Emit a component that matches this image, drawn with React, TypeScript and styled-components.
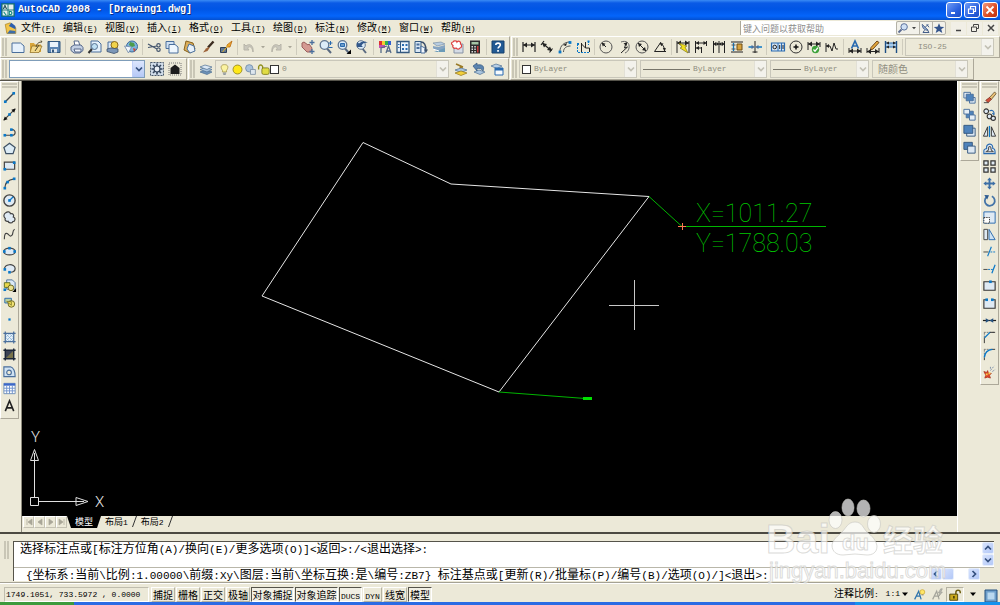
import React from "react";
import styled, { createGlobalStyle, css } from "styled-components";

const c = {
  face: "#ece9d8",
  shade: "#aca899",
  dark: "#716f64",
  light: "#ffffff",
  blue: "#2a6bb0",
  node: "#0a78c8",
  ink: "#222222",
  steel: "#4a6f9c",
  pale: "#cfe0f2",
  gold: "#e8b93c",
  disabled: "#a9a698",
};

const mono = `"Liberation Mono", "Noto Sans CJK SC", monospace`;
const cjk = `"Noto Sans CJK SC", "Liberation Sans", sans-serif`;

const GlobalStyle = createGlobalStyle`
  * { box-sizing: border-box; }
  body { margin: 0; background: ${c.face}; font-family: ${cjk}; font-size: 10px; line-height: 12px; color: #000; }
  button, input, select { font: inherit; color: inherit; margin: 0; }
`;

/* ---------- icon drawings, all on a 16 x 16 grid ---------- */

const Dot = ({ x, y, f = c.node, r = 1.4 }: { x: number; y: number; f?: string; r?: number }) => (
  <rect x={x - r} y={y - r} width={r * 2} height={r * 2} fill={f} />
);
const Arrows = ({ y = 8, a = 2, b = 14 }: { y?: number; a?: number; b?: number }) => (
  <g>
    <path d={`M${a} ${y}H${b}`} stroke={c.ink} />
    <path d={`M${a} ${y}l4-2.4v4.8zM${b} ${y}l-4-2.4v4.8z`} fill={c.ink} />
  </g>
);
const page = <path d="M2 4h8.500l3.500 3v6.500h-12z" fill="#e6f1fb" stroke={c.steel} />;
const lens = (
  <g>
    <path d="M9 9.500l4 4.500" stroke="#5a6a80" strokeWidth="2" />
    <circle cx="6.500" cy="6" r="4.300" fill="#dcecf8" stroke="#60758f" strokeWidth="1.300" />
  </g>
);

const art: Record<string, React.ReactNode> = {
  new: page,
  open: (
    <g>
      <path d="M2 4h4l1 1.500h6V13H2z" fill="#d9a63a" />
      <path d="M4 7h10l-3 6.500H2z" fill="#f3d98a" stroke="#8c6a1c" strokeWidth=".7" />
      <path d="M8 8c1-4 3-5 6-5l-1-1.500M11 6l-4 6" stroke="#51492d" fill="none" />
    </g>
  ),
  save: (
    <g>
      <path d="M2 2.500h12v11H2z" fill="#5c86b4" stroke="#33587f" />
      <path d="M4 3h8v5H4z" fill="#eaf3fb" />
      <path d="M5 10h6v3.500H5z" fill="#dde6ee" />
      <path d="M6 10.500h2v3H6z" fill="#33587f" />
    </g>
  ),
  print: (
    <g stroke="#56688a">
      <path d="M5 2h4.500L11 7H6z" fill="#fff" />
      <path d="M2 8l3-2h7l2 2.500v3L11 14H5l-3-2.500z" fill="#c3d0e4" />
      <path d="M5 10h7v3H6z" fill="#f0f4fa" />
    </g>
  ),
  preview: (
    <g>
      <path d="M4 2h7l3 3v8H4z" fill="#e6f1fb" stroke={c.steel} />
      <path d="M5 10l-3.500 4" stroke="#333" strokeWidth="2" />
      <circle cx="7.500" cy="7.500" r="3" fill="#bfe0f4" stroke="#55708f" />
    </g>
  ),
  publish: (
    <g>
      <path d="M3 3h7l2 2v6H3z" fill="#dbe9f6" stroke={c.steel} />
      <circle cx="9.500" cy="6" r="3.500" fill="#f0d34c" stroke="#8c6a1c" />
      <path d="M2 10l4-1 7 1v3l-4 1.500-7-2z" fill="#7c97b8" stroke="#3c506c" strokeWidth=".8" />
    </g>
  ),
  web: (
    <g>
      <circle cx="9" cy="7.500" r="5.500" fill="#7fb3dd" stroke="#3d6c9c" />
      <path d="M7 3l4 1 1 3-3 1-3-2z" fill="#4e9c4a" />
      <path d="M1.500 7l7 1-3 6z" fill="#f3f7fb" stroke="#6e88a8" strokeWidth=".8" />
      <path d="M10 9l3 1-2 3z" fill="#cc4a38" />
    </g>
  ),
  cut: (
    <g stroke="#46576e" fill="none" strokeWidth="1.200">
      <path d="M2 5l9 5M2 8.500L11 7" />
      <circle cx="12.500" cy="6.300" r="1.700" />
      <circle cx="12.500" cy="10.700" r="1.700" />
    </g>
  ),
  copy: (
    <g stroke={c.steel}>
      <path d="M2 2.500h8v7H2z" fill="#cfe0f2" />
      <path d="M5 5.500h6l3 2.500v6H5z" fill="#eef6fd" />
    </g>
  ),
  paste: (
    <g>
      <path d="M4 2l7 2 2 6-5 4-6-3z" fill="#dcae5a" stroke="#87611c" />
      <path d="M7 5l5 2 1 5-5 2-3-4z" fill="#e7f1fb" stroke={c.steel} />
    </g>
  ),
  brush: (
    <g>
      <path d="M13.500 2.500L8 8.500" stroke="#3b2c20" strokeWidth="2.400" />
      <path d="M8.500 8L6 9.500 3 13.500l4.500-1.500L9.500 9z" fill="#9c6238" />
    </g>
  ),
  block: (
    <g>
      <path d="M9 6l5-4-2 6h-3z" fill="#f3a42c" stroke="#b86a10" strokeWidth=".8" />
      <path d="M2.500 8.500h6v5h-6z" fill="#5f7896" stroke="#2e3f56" />
      <path d="M4.500 13l7-8" stroke="#e6b020" />
    </g>
  ),
  undo: <path d="M12 13C13 6 8 4 5 7L3 5v6h5L6.500 9C8 7 11 7 12 13z" fill="#c9c7bd" stroke="#b7b4a8" />,
  redo: <path d="M4 13C3 6 8 4 11 7l2-2v6H8L9.500 9C8 7 5 7 4 13z" fill="#c9c7bd" stroke="#b7b4a8" />,
  pan: (
    <g>
      <path d="M2 4l2-1 4 3 1-1 3 4-1 4H7L2 8z" fill="#d49a92" stroke="#9b5f5c" />
      <path d="M12 1v5M9.500 3.500h5M12 10v5M9.500 12.500h5" stroke={c.steel} strokeWidth="1.300" />
    </g>
  ),
  zoom: (
    <g>
      {lens}
      <path d="M10.500 4h4M12.500 2v4M10.500 8.500h4" stroke={c.blue} />
    </g>
  ),
  zoomWindow: (
    <g>
      {lens}
      <path d="M4.500 4.500h4v3h-4z" fill="#6b9ac6" stroke={c.blue} />
      <path d="M15 10.500V15h-4.500z" fill="#000" />
    </g>
  ),
  zoomPrev: (
    <g>
      <path d="M8 9l4 5" stroke="#5a6a80" strokeWidth="2" />
      <circle cx="7" cy="6" r="4.300" fill="#dcecf8" stroke="#60758f" />
      <path d="M3 8V3l2 1.500C8 1.500 12 2 14 4c-3-.5-5 0-6.500 2.500L9 8z" fill="#32588a" />
    </g>
  ),
  properties: (
    <g>
      <path d="M2 2h3v4H2z" fill="#e03030" />
      <path d="M5 2h3v4H5z" fill="#f4d030" />
      <path d="M8 2h3v4H8z" fill="#30b050" />
      <path d="M11 2h3v4h-3z" fill="#3060d0" />
      <path d="M2 6h6v3H2z" fill="#c050b0" />
      <path d="M4 14V9l6-2M9 14l2.500-7 2.500 7M10 12h3" stroke="#566b88" fill="none" strokeWidth="1.300" />
    </g>
  ),
  center: (
    <g>
      <path d="M2 2.500h12v11H2z" fill="#e9f2fa" stroke="#33587f" strokeWidth="1.300" />
      <path d="M5.500 3v10" stroke="#33587f" />
      <path d="M7 5h2v2H7zM10.500 5h2v2h-2zM7 9h2v2H7zM10.500 9h2v2h-2zM3 5h1.500v1H3zM3 8h1.500v1H3z" fill={c.blue} />
    </g>
  ),
  palettes: (
    <g>
      <path d="M2 2.500h6v11H2z" fill="#d9e7f4" stroke="#33587f" />
      <path d="M3.500 4.500h3v2h-3zM3.500 8h3v2h-3z" fill={c.steel} />
      <path d="M8 7l4 2v5H8z" fill="#f4f8fc" stroke={c.steel} />
      <path d="M8 3c4 0 5 3 5 9" fill="none" stroke="#3c506c" strokeWidth="1.500" />
      <path d="M11 10.500h4L13 14z" fill="#3c506c" />
    </g>
  ),
  sheetSet: (
    <g>
      <path d="M2 4l8-1 4 2-8 2z" fill="#b8cde2" stroke="#6d859f" strokeWidth=".6" />
      <path d="M2 7l5 1 7-2v4l-6 3-6-3z" fill="#86a4c2" />
      <path d="M3 13h11V9z" fill="#6b9bb8" />
      <path d="M2 10l6 2" stroke="#fff" />
    </g>
  ),
  markup: (
    <g>
      <path d="M5 5h9v9H5z" fill="#d5dce6" stroke="#8793a5" />
      <path d="M4 3c1-2 4-1 4 0 2-2 4 0 3.500 2 2 1 1 4-.5 4-1 2-3 1-4 0-2 1-4-1-3-2.500C1.500 5 2.500 3 4 3z" fill="#fff" stroke="#dd4040" strokeWidth="1.200" />
    </g>
  ),
  calc: (
    <g>
      <path d="M3 1.500h10v13H3z" fill="#2c2c2c" />
      <path d="M4.500 3h7v2.500h-7z" fill="#a4c4a4" />
      <path d="M4.500 7h1.500v1.500H4.500zM7.300 7h1.500v1.500H7.300zM4.500 9.500h1.500V11H4.500zM7.300 9.500h1.500V11H7.300zM4.500 12h1.500v1.500H4.500zM7.300 12h1.500v1.500H7.300z" fill="#ddd" />
      <path d="M10 7h1.500v6.500H10z" fill="#c83838" />
    </g>
  ),
  help: (
    <g>
      <path d="M2 2h12v12H2z" fill="#225a94" stroke="#17406c" />
      <path d="M5.800 6C5.800 3.500 10.300 3.500 10.300 6c0 1.500-2.200 1.700-2.200 3.600" stroke="#fff" strokeWidth="1.600" fill="none" />
      <path d="M7.200 11h1.700v1.700H7.200z" fill="#fff" />
    </g>
  ),
  dimLinear: (
    <g>
      <path d="M2 3v10M14 3v10" stroke={c.ink} strokeWidth="1.200" />
      <Arrows y={6} />
    </g>
  ),
  dimAligned: (
    <g stroke={c.ink}>
      <path d="M2 6l3-4M10.500 13.500l3-4M4 4.500l8 7" strokeWidth="1.200" />
      <path d="M3 4l5 1-3 3.500zM13 12l-5-1 3-3.500z" fill={c.ink} stroke="none" />
    </g>
  ),
  dimArc: (
    <g>
      <path d="M3 12C3 7 7 3 13 3M6.500 13c0-4 3-6 7-6" fill="none" stroke="#555" />
      <path d="M6 6l4-2-1 3z" fill={c.ink} />
      <Dot x={3} y={13} />
      <Dot x={13} y={3.500} />
    </g>
  ),
  dimOrdinate: (
    <g>
      <path d="M6.500 4v9M6.500 5l4 4h4v4M10.500 9V3" stroke={c.ink} fill="none" />
      <path d="M2.500 5v8.500h12M13.500 2v4" stroke={c.node} strokeDasharray="2 1" />
      <Dot x={3} y={5} r={1} />
      <Dot x={13.500} y={2.500} r={1} />
    </g>
  ),
  dimRadius: (
    <g>
      <circle cx="8" cy="8" r="6" fill="none" stroke="#555" />
      <path d="M8 8L4 4" stroke={c.ink} />
      <path d="M3.500 3.500l4 1.200-2.700 2.800z" fill={c.ink} />
    </g>
  ),
  dimJogged: (
    <g>
      <path d="M5 3c5-2 9 1 8 6-.5 3-2 4-4 5" fill="none" stroke="#666" />
      <path d="M10 4L8.500 9l3-1L5 14" stroke={c.ink} fill="none" />
      <path d="M11.500 3l-4 1.500 3 2.500z" fill={c.ink} />
    </g>
  ),
  dimDiameter: (
    <g>
      <circle cx="8" cy="8" r="6" fill="none" stroke="#555" />
      <path d="M4 4l8 8" stroke={c.ink} />
      <path d="M4 4l4 1-3 3zM12 12l-4-1 3-3z" fill={c.ink} />
    </g>
  ),
  dimAngular: (
    <g>
      <path d="M9 3L2.500 12.500H14M8 4c3 1.500 4.500 4 4.500 8" fill="none" stroke={c.ink} />
      <path d="M7.500 4l4 .5-2 2.800zM12.800 12.500l-2-3.500h3z" fill={c.ink} />
    </g>
  ),
  dimQuick: (
    <g>
      <path d="M2 2v12M14 2v12" stroke={c.ink} />
      <Arrows y={4} />
      <path d="M4 4l8 3-2 1 3 6-8-5 2-1z" fill="#f3e11c" stroke="#6f6510" strokeWidth=".6" />
    </g>
  ),
  dimBaseline: (
    <g>
      <path d="M2.500 2v12M8.500 8v6M13.500 2v5" stroke={c.ink} />
      <path d="M3 4h10M3 9h6" stroke={c.ink} />
      <path d="M3 4l3-2v4zM13.500 4l-3-2v4zM3 9l3-2v4z" fill={c.ink} />
    </g>
  ),
  dimContinue: (
    <g>
      <path d="M2.500 2v12M8 2v12M13.500 2v12M3 5h10" stroke={c.ink} />
      <path d="M2.500 5l2.500-2v4zM8 5L5.500 3v4zM8 5l2.500-2v4zM13.500 5L11 3v4z" fill={c.ink} />
    </g>
  ),
  dimSpace: (
    <g>
      <path d="M2 3h12M2 13h12" stroke={c.ink} strokeWidth="1.200" />
      <path d="M8 5h5v6H8z" fill="#d8a23c" stroke="#6e4e14" />
      <path d="M4.500 4v8" stroke={c.node} strokeWidth="1.300" />
      <path d="M2.500 6h4M2.500 10h4" stroke="#555" />
    </g>
  ),
  dimBreak: (
    <g>
      <path d="M8 2v12" stroke={c.ink} />
      <path d="M1.500 8h4M11 8h4" stroke={c.node} strokeWidth="1.600" />
      <path d="M8 8L4.500 6v4zM8 8l3.500-2v4z" fill={c.steel} />
      <path d="M5.500 13h5" stroke={c.ink} />
    </g>
  ),
  tolerance: (
    <g>
      <path d="M1.500 4h13v8h-13z" fill="#d6e6f5" stroke={c.blue} strokeWidth="1.200" />
      <path d="M8 4v8M11.500 4v8" stroke={c.blue} />
      <circle cx="4.700" cy="8" r="1.800" fill="none" stroke="#222" />
      <path d="M9.700 6v4M13 6v4" stroke="#222" />
    </g>
  ),
  centerMark: (
    <g>
      <circle cx="8" cy="8" r="6" fill="none" stroke="#333" />
      <path d="M5.500 8h5M8 5.500v5" stroke="#111" strokeWidth="1.500" />
    </g>
  ),
  inspection: (
    <g>
      <path d="M2 3v8M14 3v5" stroke={c.ink} />
      <Arrows y={5} />
      <circle cx="9.500" cy="10.500" r="3.700" fill="#3da23a" />
      <path d="M7.500 10.500l1.500 1.700 3-3.500" stroke="#fff" strokeWidth="1.300" fill="none" />
    </g>
  ),
  dimJogLine: (
    <g>
      <path d="M2 4v9M2 7h4l2 5 2-8 2 6h2" fill="none" stroke={c.ink} />
      <path d="M2 7l3-2v4z" fill={c.ink} />
    </g>
  ),
  dimEdit: (
    <g>
      <path d="M4.500 9.500L8 2l3.500 7.500M5.800 7h4.400" fill="none" stroke={c.blue} strokeWidth="1.700" />
      <path d="M2 9v5M14 9v5" stroke={c.ink} />
      <Arrows y={12} />
    </g>
  ),
  dimTextEdit: (
    <g>
      <path d="M12 2l2 1.500L8 10l-2.500 1 .5-2.500z" fill="#e6a93c" stroke="#70481a" />
      <path d="M2 9v5M14 9v5" stroke={c.ink} />
      <Arrows y={12.500} />
    </g>
  ),
  dimUpdate: (
    <g>
      <path d="M2.500 2v12M13.500 2v12" stroke="#1d4f86" strokeWidth="1.400" />
      <path d="M3 4h10v4H3z" fill="#a8cbe9" />
      <path d="M3 4h10M3 8h10" stroke={c.blue} />
      <path d="M3 4l3-1.500v3zM13 4l-3-1.500v3zM3 8l3-1.500v3zM13 8l-3-1.500v3z" fill={c.ink} />
    </g>
  ),
  gear: (
    <g>
      <path d="M1.500 1.500h13v13h-13z" fill="#cfdbe8" stroke="#4a5a6c" strokeDasharray="2 1" />
      <path d="M8 2.500v11M2.500 8h11M4 4l8 8M12 4l-8 8" stroke="#33445a" strokeWidth="1.600" />
      <circle cx="8" cy="8" r="3" fill="#e8eef5" stroke="#33445a" strokeWidth="1.200" />
    </g>
  ),
  myWorkspace: (
    <g>
      <path d="M2 2h12v12H2z" fill="none" stroke="#777" strokeDasharray="1 1" />
      <path d="M3.500 13V7L8 3.500 12.500 7v6z" fill="#1c1c1c" />
    </g>
  ),
  layers: (
    <g stroke="#4c6f92" strokeWidth=".7">
      <path d="M2 11l5-2 7 2-5 2.500z" fill="#6d92b8" />
      <path d="M2 8.500l5-2 7 2-5 2.500z" fill="#a9c4de" />
      <path d="M2 6l5-2 7 2-5 2.500z" fill="#dbe8f4" />
    </g>
  ),
  bulb: (
    <g>
      <path d="M8 2c5 0 5 4 2.500 7v2h-5V9C3 6 3 2 8 2z" fill="#fbf3a0" stroke="#a5964a" />
      <path d="M6 12.500h4M6.500 14h3" stroke="#6e7a88" />
    </g>
  ),
  sun: <circle cx="8" cy="8" r="5.500" fill="#ffe818" stroke="#9b8f28" strokeWidth="1.200" />,
  viewport: (
    <g>
      <circle cx="6.500" cy="6.500" r="4.500" fill="#a9c2dc" stroke="#6b88a8" />
      <path d="M8 8h6v6H8z" fill="#dde6ee" stroke="#7d8fa3" />
    </g>
  ),
  lockOpen: (
    <g>
      <path d="M2 8V5a2.500 2.500 0 0 1 5 0v3" fill="none" stroke="#8f8f1c" strokeWidth="1.700" />
      <rect x="6" y="6" width="9" height="8" rx="2" fill="#e0dc44" stroke="#77751a" />
    </g>
  ),
  makeCurrent: (
    <g>
      <path d="M2 9l6-2 6 2-6 2.500z" fill="#a9c4de" stroke="#4c6f92" strokeWidth=".7" />
      <path d="M2 12l6-2 6 2-6 2.500z" fill="#f2cf3a" stroke="#90741a" strokeWidth=".7" />
      <path d="M3 3l7 3M10 6L6.500 6.500" stroke="#9a7a26" strokeWidth="1.600" />
    </g>
  ),
  layerPrev: (
    <g>
      <path d="M3 11l5-2 6 2-5 2.500z" fill="#a9c4de" stroke="#4c6f92" strokeWidth=".7" />
      <path d="M2 5l4-3v2c5-1 8 1 6 6-1-2-3-3-6-2.500V10z" fill="#5b84b0" stroke="#33587f" strokeWidth=".7" />
    </g>
  ),
  layerState: (
    <g>
      <path d="M2 5l5-2 6 2-5 2.500z" fill="#b9d0e6" stroke="#4c6f92" strokeWidth=".7" />
      <path d="M6 7h8v7H6z" fill="#f6fafd" stroke={c.blue} />
      <path d="M6 7h8v2.500H6z" fill={c.blue} />
    </g>
  ),
  line: (
    <g>
      <path d="M3 13L13 3" stroke="#444" strokeWidth="1.400" />
      <Dot x={3.500} y={12.500} />
      <Dot x={12.500} y={3.500} />
    </g>
  ),
  xline: (
    <g>
      <path d="M2 14L14 2" stroke="#444" strokeWidth="1.300" />
      <path d="M1.500 14.500l4.500-1.500L3 10zM14.500 1.500L10 3l3 3z" fill="#111" />
      <Dot x={8} y={8} />
    </g>
  ),
  pline: (
    <g>
      <path d="M3 12h8c4 0 4-6 0-6H9" fill="none" stroke="#444" strokeWidth="1.200" />
      <Dot x={3} y={12} />
      <Dot x={10} y={12} />
      <Dot x={10} y={6} />
    </g>
  ),
  polygon: <path d="M8 2.500l6 4.500-2.200 6.500H4.200L2 7z" fill="#dcebf5" stroke="#3d5064" strokeWidth="1.300" />,
  rectangle: (
    <g>
      <path d="M2.500 4.500h11v7.500h-11z" fill="#dfeaf4" stroke="#444" strokeWidth="1.300" />
      <Dot x={13} y={5} />
      <Dot x={3} y={12} />
    </g>
  ),
  arc: (
    <g>
      <path d="M3 13C3 7 7 4 13 3" fill="none" stroke="#444" strokeWidth="1.300" />
      <Dot x={3} y={13} />
      <Dot x={6} y={6.500} />
      <Dot x={13} y={3} />
    </g>
  ),
  circle: (
    <g>
      <circle cx="8" cy="8" r="6" fill="#dfeaf4" stroke="#444" strokeWidth="1.500" />
      <path d="M8 8l4-4" stroke={c.node} strokeWidth="1.300" />
      <Dot x={8} y={8} />
    </g>
  ),
  cloud: (
    <path d="M4 3c2-2 5-1 5 1 3-1 4 2 3 3.500 3 1 2 5-.500 5-1 2-4.500 1.500-5-.500-2 .500-4-1-3-3C1 7 2 4 4 3z" fill="#dfeaf4" stroke="#444" strokeWidth="1.300" />
  ),
  spline: <path d="M2.500 13c0-5 1-7 3-6s3 4 5 2 0-5 3-6.500" fill="none" stroke="#444" strokeWidth="1.200" />,
  ellipse: (
    <g>
      <ellipse cx="8" cy="8" rx="6" ry="3.700" fill="#dfeaf4" stroke="#444" strokeWidth="1.300" />
      <Dot x={8} y={4.500} />
      <Dot x={2.500} y={8} />
      <Dot x={13.500} y={8} />
    </g>
  ),
  ellipseArc: (
    <g>
      <path d="M3 9C1 3 14 2 14 8c0 3-3 4-5 4" fill="#dfeaf4" stroke="#444" strokeWidth="1.300" />
      <Dot x={3} y={9} />
      <Dot x={8} y={12} />
    </g>
  ),
  insertBlock: (
    <g>
      <path d="M5 2h6l3 3v7H5z" fill="#dbe9f6" stroke={c.steel} />
      <path d="M2.500 5h6v5h-6z" fill="#e9d84c" stroke="#5d6f2a" />
      <circle cx="9.500" cy="10.500" r="3" fill="#e9e08c" stroke="#6a6420" />
      <path d="M15 11v4h-4z" fill="#000" />
      <Dot x={3} y={12.500} />
    </g>
  ),
  makeBlock: (
    <g>
      <path d="M3 3.500h7v5H3z" fill="#b9d0a0" stroke={c.blue} />
      <circle cx="10" cy="9.500" r="3.500" fill="#f1e274" stroke="#6a6420" />
      <path d="M5 7h5v4z" fill="#e9d84c" stroke="#6a6420" strokeWidth=".7" />
    </g>
  ),
  point: <Dot x={8} y={8} r={1.200} />,
  hatch: (
    <g>
      <path d="M3.500 3.500h9v9h-9z" fill="#eaf3fa" />
      <path d="M4 8l4-4M4 12l8-8M8 12l4-4M4 4l8 8M4 8l4 4M8 4l4 4" stroke="#7fa9cf" strokeWidth=".7" />
      <path d="M3.500 1.500v13M12.500 1.500v13M1.500 3.500h13M1.500 12.500h13" stroke={c.steel} strokeWidth="1.300" />
    </g>
  ),
  gradient: (
    <g>
      <path d="M3.500 3.500h9v9h-9z" fill="#3b4254" />
      <path d="M12.500 3.500v9h-9z" fill="#77724a" />
      <path d="M3.500 1.500v13M12.500 1.500v13M1.500 3.500h13M1.500 12.500h13" stroke="#1b2638" strokeWidth="1.500" />
    </g>
  ),
  region: (
    <g>
      <path d="M2 13.500V3h7c3 1 5 4 5 10.500z" fill="#cfe2f3" stroke={c.steel} strokeWidth="1.200" />
      <circle cx="7.500" cy="9" r="2.500" fill="#ece9d8" stroke={c.steel} strokeWidth="1.200" />
    </g>
  ),
  table: (
    <g>
      <path d="M2 2.500h12v11H2z" fill="#fff" stroke="#7090b8" />
      <path d="M2 2.500h12V5H2z" fill="#3c68c8" />
      <path d="M2 7.700h12M2 10.500h12M5 5v8.500M8 5v8.500M11 5v8.500" stroke="#6f92cc" />
    </g>
  ),
  mtext: <path d="M3.500 14L8 3l4.500 11M5 10.500h6" fill="none" stroke="#222" strokeWidth="1.700" />,
  orderFront: (
    <g stroke={c.steel}>
      <path d="M2 2.500h7v6H2zM8 8h6v6H8z" fill="#e6eef6" />
      <path d="M4.500 4.500h7.500v7H4.500z" fill="#4f83bb" />
    </g>
  ),
  orderBack: (
    <g stroke={c.steel}>
      <path d="M4.500 4.500h7.500v7H4.500z" fill="#4f83bb" />
      <path d="M2 2.500h6v5H2zM8 8.500h6V14H8z" fill="#e6eef6" />
    </g>
  ),
  orderAbove: (
    <g stroke="#33587f">
      <path d="M5 5.500h9V14H5z" fill="#dce8f3" />
      <path d="M2 2.500h9.500V11H2z" fill="#4f83bb" />
    </g>
  ),
  orderUnder: (
    <g stroke="#33587f">
      <path d="M2 2.500h9V10H2z" fill="#4f83bb" />
      <path d="M6 6.500h8V14H6z" fill="#dce8f3" />
    </g>
  ),
  erase: (
    <g>
      <path d="M13.500 2L8 8l2 2 5-6z" fill="#e8c078" stroke="#5e4620" strokeWidth=".8" />
      <path d="M8 8l-4 3 2.500 2.500L10 10z" fill="#d0503c" stroke="#7b2a1c" strokeWidth=".8" />
      <path d="M2 13.500h5" stroke="#444" />
    </g>
  ),
  copyObj: (
    <g fill="#dfeaf4" stroke="#333" strokeWidth="1.200">
      <circle cx="4.500" cy="4.500" r="2.500" />
      <circle cx="8" cy="10" r="2.500" />
      <circle cx="12" cy="12" r="2.300" />
      <path d="M8 4c3-1 5 0 5 4M13 8.500l-2-2" fill="none" stroke={c.blue} />
    </g>
  ),
  mirror: (
    <g>
      <path d="M6 3v10H1.500zM10 3v10h4.500z" fill="#dfeaf4" stroke="#333" />
      <path d="M8 2v12" stroke={c.node} strokeWidth="1.300" />
    </g>
  ),
  offset: (
    <g fill="none" strokeWidth="1.200">
      <path d="M2 13.500V10c0-1 2-1.500 3-2-1-5 6-7 6.500-1v1c2 .500 2.500 1 2.500 5.500z" stroke={c.blue} fill="#dfeaf4" />
      <path d="M4.500 11.500c1-1 3-1 2.500-3-.500-3 2.500-3.500 2.500-1 0 3 1 2.500 2.500 4z" stroke="#555" />
    </g>
  ),
  array: (
    <g fill="#dfeaf4" stroke="#333" strokeWidth="1.300">
      <path d="M2 2h4.500v4.500H2zM9.500 2H14v4.500H9.500zM2 9.500h4.500V14H2zM9.500 9.500H14V14H9.500z" />
    </g>
  ),
  move: (
    <path d="M8 1.500l2.500 3H9V7h2.500V5.500l3 2.500-3 2.500V9H9v2.500h1.500L8 14.500l-2.500-3H7V9H4.500v1.500L1.500 8l3-2.500V7H7V4.500H5.500z" fill="#3c6ea6" />
  ),
  rotate: (
    <g>
      <path d="M5 4.200A5.300 5.300 0 1 0 10.500 3.500" fill="none" stroke="#4474a8" strokeWidth="1.900" />
      <path d="M2.500 2l5 .500L5.500 7z" fill="#2c5a90" />
    </g>
  ),
  scale: (
    <g>
      <path d="M2 2h12v12H2z" fill="#dfeaf4" stroke={c.blue} />
      <path d="M2 8h6v6H2z" fill="#fff" stroke="#333" strokeDasharray="1.500 1" />
    </g>
  ),
  stretch: (
    <g>
      <path d="M2 2.500h4v11H2z" fill="#dfeaf4" stroke="#444" />
      <path d="M7.500 2.500l6.500 11H7.500z" fill="#cfe2f3" stroke={c.blue} />
    </g>
  ),
  trim: (
    <g>
      <path d="M1.500 8.500H7" stroke="#444" />
      <path d="M9 8.500h6" stroke={c.node} strokeDasharray="2 1" />
      <path d="M6 13l4-10" stroke={c.node} strokeWidth="1.200" />
    </g>
  ),
  extend: (
    <g>
      <path d="M1.500 9H6" stroke="#444" />
      <path d="M6.500 9H12" stroke={c.node} strokeDasharray="2 1" />
      <path d="M10.500 13l3.500-9" stroke={c.node} strokeWidth="1.300" />
    </g>
  ),
  breakPoint: (
    <g>
      <path d="M2 4h12v9H2z" fill="#dfeaf4" stroke="#333" strokeWidth="1.200" />
      <Dot x={9} y={4} />
    </g>
  ),
  breakTwo: (
    <g>
      <path d="M5 4H2v9h12V4h-3" fill="#dfeaf4" stroke="#333" strokeWidth="1.200" />
      <Dot x={5} y={4} />
      <Dot x={11} y={4} />
    </g>
  ),
  join: (
    <g>
      <path d="M1 8h14" stroke="#222" strokeWidth="1.300" />
      <path d="M8 8L4 5.500v5zM8 8l4-2.500v5z" fill="#25527f" />
    </g>
  ),
  chamfer: (
    <g fill="none">
      <path d="M2 2.500h12" stroke="#777" strokeDasharray="2 1" />
      <path d="M2.500 14V8M8 2.500h6" stroke="#333" />
      <path d="M2.500 8.500L8.500 2.500" stroke={c.node} strokeWidth="1.300" />
      <path d="M2.500 3v5" stroke="#777" strokeDasharray="2 1" />
    </g>
  ),
  fillet: (
    <g fill="none">
      <path d="M2 2.500h8M2.500 3v7" stroke="#777" strokeDasharray="2 1" />
      <path d="M2.500 14v-3M10 2.500h4" stroke="#333" />
      <path d="M2.500 11C3 6 6 3 11 2.500" stroke={c.node} strokeWidth="1.500" />
    </g>
  ),
  explode: (
    <g>
      <path d="M2 8l3 1 1-2 1 3 3 0-2 2 1 3-3-1-3 1 1-3z" fill="#e0452c" stroke="#a02814" strokeWidth=".7" />
      <path d="M4 10h2v2H4zM7 9h2v2H7z" fill="#f7cf4a" />
      <path d="M9 7l4-5M11 8l3-2M9 5V2" stroke="#7d8fa8" strokeDasharray="2 1" />
    </g>
  ),
  appLogo: (
    <g>
      <path d="M1 1h14v14H1z" fill="#e3efed" stroke="#0e6a6e" strokeWidth="1.500" />
      <path d="M8 1v14M1 8h14" stroke="#0e6a6e" />
      <path d="M2.500 7L4.500 2.500 6.500 7M3.500 5.500h2" stroke="#0b3c48" fill="none" />
      <path d="M9.500 13.500V9.500c4 0 4 4 0 4zM3 10l3 4" stroke="#0e8a80" fill="none" strokeWidth="1.200" />
    </g>
  ),
  docLogo: (
    <g>
      <path d="M1.500 3l6-2 7 6v7h-11z" fill="#f2c448" stroke="#a37a1a" strokeWidth=".8" />
      <path d="M6 5l3-4 5 4v4z" fill="#2c5fae" />
      <path d="M4 14l3-4 7 1v3z" fill="#3f6ea8" />
    </g>
  ),
  search: (
    <g>
      <path d="M6 10l-4 4" stroke="#5a6a90" strokeWidth="2.400" />
      <circle cx="9.500" cy="6.500" r="4.300" fill="#cfe0f5" stroke="#566c98" strokeWidth="1.300" />
    </g>
  ),
  satellite: (
    <g>
      <path d="M3 3c0 6 3 8 8 8z" fill="#8fa6c8" stroke="#3e5886" />
      <path d="M7 7l4-4M9 3l3 4M6 11l-2 3h8l-2-3" stroke="#3e5886" fill="none" strokeWidth="1.300" />
    </g>
  ),
  star: <path d="M8 1.500l2 4.700 5 .3-4 3.200 1.400 5L8 12l-4.400 2.700L5 9.700 1 6.500l5-.3z" fill="#33548c" />,
  annoBulb: (
    <g>
      <path d="M2 14L7 4l3 10M4 10h5" fill="none" stroke="#2e74ae" strokeWidth="1.500" />
      <circle cx="11.500" cy="5" r="3" fill="#ffe668" stroke="#c8a022" strokeWidth=".8" />
      <path d="M10.500 8.500h2.500" stroke="#777" />
    </g>
  ),
  annoBolt: (
    <g>
      <path d="M2 14L7 4l3 10M4 10h5" fill="none" stroke="#a5a59c" strokeWidth="1.500" />
      <path d="M12 1l-3 5h2l-2 5 5-6h-2l2-4z" fill="#b9b9b0" stroke="#8e8e84" strokeWidth=".6" />
    </g>
  ),
  statusLock: (
    <g>
      <path d="M9 8V5a2.500 2.500 0 0 1 5 0v1" fill="none" stroke="#6e5f10" strokeWidth="1.700" />
      <path d="M2 7h9v7H2z" fill="#c8a81c" stroke="#4c4008" />
      <path d="M6 9h1.500v3H6z" fill="#2a2404" />
    </g>
  ),
  cleanScreen: (
    <g>
      <path d="M2 2h12v12H2z" fill="#6f9fcb" stroke="#24507f" />
      <path d="M4.500 4.500h7v7h-7z" fill="#b9d8f0" />
    </g>
  ),
};

const Glyph = styled.svg<{ $size?: number }>`
  display: block;
  flex: none;
  width: ${(p) => p.$size ?? 16}px;
  height: ${(p) => p.$size ?? 16}px;
`;
const Icon = ({ name, size }: { name: string; size?: number }) => (
  <Glyph $size={size} viewBox="0 0 16 16" fill="none" aria-hidden="true">
    {art[name]}
  </Glyph>
);

/* ---------- mixed Chinese and Latin text ---------- */

const Latin = styled.span<{ $size: number }>`
  font-family: ${mono};
  font-size: ${(p) => p.$size}px;
`;
const Mixed = ({ text, latin = 8 }: { text: string; latin?: number }) => (
  <>
    {text.split(/([\x20-\x7e]+)/).map((part, i) =>
      i % 2 ? (
        <Latin key={i} $size={latin}>
          {part}
        </Latin>
      ) : (
        part
      )
    )}
  </>
);

/* ---------- window frame ---------- */

const Window = styled.div`
  display: flex;
  flex-direction: column;
  min-height: 100vh;
  position: relative;
  overflow: hidden;
`;

const TitleBar = styled.header`
  display: flex;
  align-items: center;
  height: 20px;
  padding: 0 2px 0 1px;
  gap: 3px;
  background: linear-gradient(#3a8bf5 0, #0a5ae6 3px, #0055e5 9px, #0465fb 16px, #0450d0 20px);
`;
const Title = styled.h1`
  flex: 1;
  margin: 0;
  font: bold 10px/16px ${mono};
  color: #fff;
  text-shadow: 1px 1px 0 #0a2f86;
  white-space: pre;
`;
const CaptionButtons = styled.div`
  display: flex;
  gap: 2px;
`;
const CaptionButton = styled.button<{ $close?: boolean }>`
  width: 16px;
  height: 16px;
  padding: 0;
  display: grid;
  place-items: center;
  border: 1px solid #fff;
  border-radius: 3px;
  background: ${(p) =>
    p.$close ? "linear-gradient(135deg, #f09a80, #dc4a22 60%, #b83010)" : "linear-gradient(135deg, #6f9cf5, #2a62e0 60%, #1c4cc4)"};
`;

const MenuBar = styled.nav`
  display: flex;
  align-items: center;
  height: 16px;
  padding: 0 2px 0 4px;
`;
const Menus = styled.ul`
  display: flex;
  flex: 1;
  margin: 0;
  padding: 0 0 0 4px;
  list-style: none;
`;
const MenuButton = styled.button`
  width: 42px;
  padding: 0;
  border: 0;
  background: none;
  text-align: left;
  line-height: 14px;
  white-space: nowrap;
`;
const SearchBox = styled.input`
  width: 156px;
  height: 14px;
  padding: 0 2px;
  border: 0;
  border-left: 1px solid ${c.shade};
  background: #fff;
  font-size: 9px;
  line-height: 12px;
  &::placeholder {
    color: #8c8c8c;
    opacity: 1;
  }
`;
const HelpGroup = styled.div`
  display: flex;
  align-items: center;
  height: 14px;
  border: 1px solid #b4b2a8;
  border-radius: 2px;
  background: #f2f1ea;
`;
const HelpButton = styled.button<{ $wide?: boolean }>`
  display: flex;
  align-items: center;
  gap: 3px;
  width: ${(p) => (p.$wide ? 22 : 13)}px;
  height: 12px;
  padding: 0;
  border: 0;
  background: none;
  & + & {
    border-left: 1px solid #b4b2a8;
  }
`;
const DocButtons = styled.div`
  display: flex;
  align-items: center;
  gap: 1px;
  padding-left: 5px;
`;
const DocButton = styled.button`
  width: 15px;
  height: 13px;
  padding: 0;
  display: grid;
  place-items: center;
  border: 0;
  background: #f1efe6;
`;

/* ---------- toolbars ---------- */

const ToolRow = styled.div`
  display: flex;
  height: 22px;
  gap: 1px;
`;
const bevel = css`
  border-top: 1px solid #fff;
  border-left: 1px solid #fff;
  border-right: 1px solid ${c.shade};
  border-bottom: 1px solid ${c.shade};
`;
const Bar = styled.div<{ $grow?: boolean }>`
  ${bevel}
  display: flex;
  align-items: center;
  padding: 0 2px 0 1px;
  min-width: 0;
  flex: ${(p) => (p.$grow ? "1 1 0" : "none")};
`;
const Grip = styled.span<{ $row?: boolean }>`
  flex: none;
  ${(p) =>
    p.$row
      ? css`
          width: 15px;
          height: 5px;
          border-top: 2px solid #c9c6b6;
          border-bottom: 2px solid #c9c6b6;
          margin: 1px 0;
        `
      : css`
          width: 5px;
          height: 18px;
          border-left: 2px solid #c9c6b6;
          border-right: 2px solid #c9c6b6;
          margin-right: 2px;
        `}
`;
const Tool = styled.button<{ $size?: "drop" | "row" }>`
  flex: none;
  width: ${(p) => (p.$size === "drop" ? 9 : 18)}px;
  height: 18px;
  padding: 0;
  display: grid;
  place-items: center;
  border: 0;
  background: none;
`;
const Divider = styled.span`
  flex: none;
  width: 1px;
  height: 16px;
  margin: 0 2px;
  background: #cfccbd;
`;

const Tri = ({ color = "#000", size = 6 }: { color?: string; size?: number }) => (
  <svg width={size} height={size} viewBox="0 0 6 6" aria-hidden="true">
    <path d="M0 1.500h6L3 5z" fill={color} />
  </svg>
);

const ToolList = ({ items }: { items: string[] }) => (
  <>
    {items.map((n, i) =>
      n === "|" ? (
        <Divider key={i} />
      ) : n === "v" ? (
        <Tool key={i} $size="drop" aria-label="history list">
          <Tri color={c.disabled} size={4} />
        </Tool>
      ) : (
        <Tool key={n} aria-label={n}>
          <Icon name={n} />
        </Tool>
      )
    )}
  </>
);

const standardTools = "new open save | print preview publish web | cut copy paste brush block | undo v redo v | pan zoom zoomWindow zoomPrev | properties center palettes sheetSet markup calc | help".split(" ");
const dimensionTools = "dimLinear dimAligned dimArc dimOrdinate | dimRadius dimJogged dimDiameter dimAngular | dimQuick dimBaseline dimContinue dimSpace dimBreak | tolerance centerMark inspection dimJogLine | dimEdit dimTextEdit dimUpdate |".split(" ");
const drawTools = "line xline pline polygon rectangle arc circle cloud spline ellipse ellipseArc insertBlock makeBlock point hatch gradient region table mtext".split(" ");
const orderTools = "orderFront orderBack orderAbove orderUnder".split(" ");
const modifyTools = "erase copyObj mirror offset array move rotate scale stretch trim extend breakPoint breakTwo join chamfer fillet explode".split(" ");

const Combo = styled.div<{ $w: number; $active?: boolean; $grow?: boolean; $indent?: boolean }>`
  display: flex;
  align-items: center;
  flex: ${(p) => (p.$grow ? "1 1 0" : "none")};
  width: ${(p) => p.$w}px;
  height: 18px;
  margin-right: 3px;
  padding-left: ${(p) => (p.$indent ? 12 : 2)}px;
  gap: 3px;
  border: 1px solid ${(p) => (p.$active ? "#7f9db9" : "#c9c7ba")};
  background: ${(p) => (p.$active ? "#fff" : c.face)};
  color: ${(p) => (p.$active ? "#000" : "#8f8d80")};
`;
const ComboSelect = styled.select<{ $cjk?: boolean }>`
  flex: 1;
  min-width: 0;
  height: 16px;
  padding: 0 0 0 ${(p) => (p.$cjk ? 3 : 0)}px;
  border: 0;
  appearance: none;
  background: none;
  opacity: 1;
  color: inherit;
  font-family: ${(p) => (p.$cjk ? cjk : mono)};
  font-size: ${(p) => (p.$cjk ? 10 : 8)}px;
`;
const ComboArrow = styled.span<{ $active?: boolean }>`
  flex: none;
  width: 12px;
  height: 16px;
  display: grid;
  place-items: center;
  background: ${(p) => (p.$active ? "linear-gradient(#dce6fd, #b4c8f6)" : "#f3f2ec")};
  border-left: 1px solid ${(p) => (p.$active ? "#c0d0f8" : "#e2e0d6")};
`;
const Chevron = ({ dir = "down", color = "#35507e" }: { dir?: "down" | "up" | "left" | "right"; color?: string }) => {
  const d = { down: "M1 2.500l3 3 3-3", up: "M1 5.500l3-3 3 3", left: "M5.500 1l-3 3 3 3", right: "M2.500 1l3 3-3 3" }[dir];
  return (
    <svg width="8" height="8" viewBox="0 0 8 8" aria-hidden="true">
      <path d={d} fill="none" stroke={color} strokeWidth="1.700" />
    </svg>
  );
};
type PickProps = { label: string; value: string; w: number; active?: boolean; grow?: boolean; indent?: boolean; isCjk?: boolean; children?: React.ReactNode };
const Pick = ({ label, value, w, active, grow, indent, isCjk, children }: PickProps) => (
  <Combo $w={w} $active={active} $grow={grow} $indent={indent}>
    {children}
    <ComboSelect aria-label={label} $cjk={isCjk} disabled={!active}>
      <option>{value}</option>
    </ComboSelect>
    <ComboArrow $active={active}>
      <Chevron color={active ? undefined : "#c2c0b4"} />
    </ComboArrow>
  </Combo>
);
const Swatch = styled.span`
  flex: none;
  width: 9px;
  height: 9px;
  border: 1px solid #333;
  background: #fff;
`;
const Stroke = styled.span<{ $w: number }>`
  flex: none;
  width: ${(p) => p.$w}px;
  height: 1px;
  background: #77756a;
`;
const LayerFlags = styled.span`
  display: flex;
  align-items: center;
  flex: none;
`;

/* ---------- work area ---------- */

const Work = styled.main`
  display: flex;
  flex: 1;
  border-top: 1px solid #55534a;
`;
const Side = styled.aside<{ $right?: boolean }>`
  display: flex;
  align-items: flex-start;
  flex: none;
  gap: 1px;
  width: ${(p) => (p.$right ? 43 : 22)}px;
  padding-left: ${(p) => (p.$right ? 2 : 0)}px;
  border-left: ${(p) => (p.$right ? "1px solid #fff" : "0")};
  border-right: ${(p) => (p.$right ? "0" : "1px solid #8d8a7c")};
`;
const Column = styled.div<{ $h: number }>`
  ${bevel}
  display: flex;
  flex-direction: column;
  align-items: center;
  width: 19px;
  height: ${(p) => p.$h}px;
  padding-bottom: 4px;
`;
const ColumnTool = styled.button`
  flex: 1;
  width: 17px;
  padding: 0;
  display: grid;
  place-items: center;
  border: 0;
  background: none;
  overflow: visible;
  min-height: 0;
`;
const ToolColumn = ({ items, h }: { items: string[]; h: number }) => (
  <Column $h={h}>
    <Grip $row />
    {items.map((n) => (
      <ColumnTool key={n} aria-label={n}>
        <Icon name={n} size={15} />
      </ColumnTool>
    ))}
  </Column>
);
const Center = styled.section`
  display: flex;
  flex-direction: column;
  flex: 1;
  min-width: 0;
`;
const Canvas = styled.div`
  flex: 1;
  background: #000;
`;
const Drawing = styled.svg`
  display: block;
  width: 100%;
`;
const DimText = styled.text`
  font-family: "Roboto", sans-serif;
  font-weight: 100;
  font-size: 25px;
  fill: #00c800;
`;
const AxisText = styled.text`
  font-family: "Roboto", sans-serif;
  font-weight: 300;
  font-size: 15px;
  fill: #e8e8e8;
`;

const Tabs = styled.div`
  display: flex;
  height: 16px;
  padding-left: 1px;
  align-items: flex-start;
`;
const TabNav = styled.button`
  width: 11px;
  height: 12px;
  padding: 0;
  display: grid;
  place-items: center;
  border: 1px solid;
  border-color: #fff #c4c1b2 #c4c1b2 #fff;
  background: ${c.face};
`;
const Tab = styled.button<{ $on?: boolean }>`
  height: 12px;
  padding: 0 ${(p) => (p.$on ? 8 : 4)}px;
  border: 0;
  font-size: 9px;
  line-height: 12px;
  white-space: nowrap;
  background: ${(p) => (p.$on ? "#000" : "none")};
  color: ${(p) => (p.$on ? "#fff" : "#000")};
  clip-path: ${(p) => (p.$on ? "polygon(0 0, 100% 0, calc(100% - 4px) 100%, 4px 100%)" : "none")};
`;
const Slash = () => (
  <svg width="5" height="12" viewBox="0 0 5 12" aria-hidden="true">
    <path d="M4.500 0L.5 11" stroke="#333" fill="none" />
  </svg>
);

/* ---------- command line ---------- */

const Command = styled.section`
  display: flex;
  height: 51px;
  padding: 7px 6px 2px 4px;
  border-top: 2px solid #4c4a42;
  gap: 2px;
`;
const CommandBox = styled.div`
  flex: 1;
  min-width: 0;
  display: grid;
  grid-template-rows: 25px 1fr;
  border-left: 1px solid #55534a;
  border-top: 1px solid #55534a;
  background: #fff;
  font-size: 12px;
  line-height: 12px;
`;
const CommandRow = styled.div<{ $input?: boolean }>`
  display: flex;
  justify-content: space-between;
  min-width: 0;
  padding-left: ${(p) => (p.$input ? 12 : 6)}px;
  border-top: ${(p) => (p.$input ? "1px solid #b9b7aa" : "0")};
`;
const CommandText = styled.p`
  margin: 0;
  white-space: pre;
`;
const VScroll = styled.div`
  display: flex;
  flex-direction: column;
  flex: none;
`;
const HScroll = styled.div`
  display: flex;
  flex: none;
  width: 64px;
  padding-right: 14px;
  background: linear-gradient(to right, #fff 50px, ${c.face} 50px);
`;
const ScrollButton = styled.button<{ $thumb?: boolean }>`
  width: 12px;
  height: 12px;
  padding: 0;
  display: grid;
  place-items: center;
  border: 1px solid #e6eefc;
  border-radius: 2px;
  background: linear-gradient(135deg, #d6e2fd, #b3c8f7);
  margin-right: ${(p) => (p.$thumb ? "auto" : "0")};
`;

/* ---------- status bar ---------- */

const Status = styled.footer`
  display: flex;
  align-items: center;
  height: 19px;
  padding: 2px 0 0 4px;
  border-top: 1px solid #fff;
  box-shadow: 0 -1px 0 #a5a294;
`;
const Coords = styled.output`
  width: 145px;
  margin-right: 2px;
  padding-left: 1px;
  font: 8px/13px ${mono};
  white-space: pre;
  border: 1px solid;
  border-color: #c0bdae #fff #fff #c0bdae;
`;
const Mode = styled.button<{ $on?: boolean; $w: number }>`
  width: ${(p) => p.$w}px;
  height: 15px;
  margin-right: 1px;
  padding: 0;
  border: 1px solid;
  border-color: ${(p) => (p.$on ? "#55534a #fff #fff #55534a" : "#fff #b5b2a2 #b5b2a2 #fff")};
  background: ${(p) => (p.$on ? "#f1efe4" : c.face)};
  line-height: 13px;
  white-space: nowrap;
`;
const Spacer = styled.span`
  flex: 1;
`;
const ScaleButton = styled.button`
  display: flex;
  align-items: center;
  gap: 2px;
  padding: 0;
  margin-right: 2px;
  border: 0;
  background: none;
  white-space: pre;
`;
const TrayButton = styled.button<{ $boxed?: boolean }>`
  width: 18px;
  height: 15px;
  padding: 0;
  display: grid;
  place-items: center;
  border: 1px solid;
  border-color: ${(p) => (p.$boxed ? "#b5b2a2 #fff #fff #b5b2a2" : "transparent")};
  background: none;
`;
const Taskbar = styled.div`
  display: grid;
  grid-template-columns: 74px 1fr 145px;
  height: 3px;
  flex: none;
`;
const TaskPart = styled.span<{ $bg: string }>`
  background: ${(p) => p.$bg};
`;

/* ---------- watermark laid over the lower right corner ---------- */

const Watermark = styled.svg`
  position: absolute;
  right: 50px;
  bottom: 13px;
  width: 184px;
  height: 96px;
  pointer-events: none;
  fill: #fff;
  fill-opacity: 0.7;
  stroke: #c4c4c0;
  stroke-opacity: 0.6;
  stroke-width: 1px;
`;
const MarkText = styled.text<{ $size: number; $weight: number }>`
  font-family: "Liberation Sans", "Noto Sans CJK SC", sans-serif;
  font-size: ${(p) => p.$size}px;
  font-weight: ${(p) => p.$weight};
`;

const menus: [string, string][] = [
  ["文件", "F"], ["编辑", "E"], ["视图", "V"], ["插入", "I"], ["格式", "O"], ["工具", "T"],
  ["绘图", "D"], ["标注", "N"], ["修改", "M"], ["窗口", "W"], ["帮助", "H"],
];

const modes: { t: string; w: number; on?: boolean }[] = [
  { t: "捕捉", w: 24 }, { t: "栅格", w: 24 }, { t: "正交", w: 24 }, { t: "极轴", w: 24 },
  { t: "对象捕捉", w: 43, on: true }, { t: "对象追踪", w: 43, on: true }, { t: "DUCS", w: 23, on: true },
  { t: "DYN", w: 19 }, { t: "线宽", w: 24 }, { t: "模型", w: 24, on: true },
];

export default function App() {
  return (
    <Window>
      <GlobalStyle />
      <TitleBar>
        <Icon name="appLogo" size={14} />
        <Title>AutoCAD 2008 - [Drawing1.dwg]</Title>
        <CaptionButtons>
          <CaptionButton aria-label="最小化">
            <svg width="10" height="10" viewBox="0 0 10 10"><path d="M2 8h4" stroke="#fff" strokeWidth="2" /></svg>
          </CaptionButton>
          <CaptionButton aria-label="还原">
            <svg width="10" height="10" viewBox="0 0 10 10"><path d="M3.500 3.500v-2h5v5h-2M1.500 4h5v4.500h-5z" stroke="#fff" fill="none" strokeWidth="1.200" /></svg>
          </CaptionButton>
          <CaptionButton aria-label="关闭" $close>
            <svg width="10" height="10" viewBox="0 0 10 10"><path d="M1.500 1.500l7 7M8.500 1.500l-7 7" stroke="#fff" strokeWidth="1.800" /></svg>
          </CaptionButton>
        </CaptionButtons>
      </TitleBar>

      <MenuBar>
        <Icon name="docLogo" size={13} />
        <Menus>
          {menus.map(([name, key]) => (
            <li key={key}>
              <MenuButton>
                {name}
                <Latin $size={8}>
                  (<u>{key}</u>)
                </Latin>
              </MenuButton>
            </li>
          ))}
        </Menus>
        <SearchBox aria-label="搜索帮助" placeholder="键入问题以获取帮助" />
        <HelpGroup>
          <HelpButton $wide aria-label="搜索">
            <Icon name="search" size={12} />
            <Tri color="#444" size={4} />
          </HelpButton>
          <HelpButton aria-label="通讯中心"><Icon name="satellite" size={12} /></HelpButton>
          <HelpButton aria-label="收藏夹"><Icon name="star" size={12} /></HelpButton>
        </HelpGroup>
        <DocButtons>
          <DocButton aria-label="最小化图形">
            <svg width="8" height="8" viewBox="0 0 8 8"><path d="M1 6.500h5" stroke="#444" strokeWidth="1.500" /></svg>
          </DocButton>
          <DocButton aria-label="还原图形">
            <svg width="8" height="8" viewBox="0 0 8 8"><path d="M2.500 2.500v-2h5v4h-2M.5 3h5v4.500h-5z" stroke="#444" fill="none" /></svg>
          </DocButton>
          <DocButton aria-label="关闭图形">
            <svg width="8" height="8" viewBox="0 0 8 8"><path d="M1 1l6 6M7 1l-6 6" stroke="#444" strokeWidth="1.500" /></svg>
          </DocButton>
        </DocButtons>
      </MenuBar>

      <ToolRow>
        <Bar>
          <Grip />
          <ToolList items={standardTools} />
        </Bar>
        <Bar $grow>
          <Grip />
          <ToolList items={dimensionTools} />
          <Pick label="标注样式" value="ISO-25" w={96} grow indent />
        </Bar>
      </ToolRow>

      <ToolRow>
        <Bar>
          <Grip />
          <Pick label="工作空间" value="" w={136} active />
          <ToolList items={["gear", "myWorkspace"]} />
        </Bar>
        <Bar>
          <Grip />
          <ToolList items={["layers"]} />
          <Pick label="图层" value="0" w={234}>
            <LayerFlags>
              <Icon name="bulb" size={13} />
              <Icon name="sun" size={13} />
              <Icon name="viewport" size={13} />
              <Icon name="lockOpen" size={13} />
              <Swatch />
            </LayerFlags>
          </Pick>
          <ToolList items={["makeCurrent", "layerPrev", "layerState"]} />
        </Bar>
        <Bar>
          <Grip />
          <Pick label="颜色" value="ByLayer" w={118}><Swatch /></Pick>
          <Pick label="线型" value="ByLayer" w={127}><Stroke $w={47} /></Pick>
          <Pick label="线宽" value="ByLayer" w={99}><Stroke $w={28} /></Pick>
          <Pick label="打印样式" value="随颜色" w={96} isCjk />
        </Bar>
      </ToolRow>

      <Work>
        <Side><ToolColumn items={drawTools} h={338} /></Side>
        <Center>
          <Canvas>
            <Drawing viewBox="0 0 935 435" fill="none">
              <path d="M341 61.500L429 103 627 115.500 477 311 240 215z" stroke="#e6e6e6" />
              <path d="M627 115.500L660 145.500H804M477 311L570 318" stroke="#00b400" />
              <path d="M561 317.500h9" stroke="#00e000" strokeWidth="3" />
              <path d="M656 145.500h8M660.500 142v7" stroke="#ff7a50" />
              <path d="M587 224.500h50M612.500 199v50" stroke="#c8c8c8" />
              <DimText x="674" y="141">X=1011.27</DimText>
              <DimText x="674" y="171">Y=1788.03</DimText>
              <g stroke="#e0e0e0">
                <path d="M8.500 416.500h8v8h-8zM12.500 416.500V379M16.500 420.500H54" />
                <path d="M12.500 368.500l4 11h-8zM12.500 372v7M66 420.500l-12-4v8zM54 420.500h8" />
              </g>
              <AxisText x="9" y="361">Y</AxisText>
              <AxisText x="73" y="426">X</AxisText>
            </Drawing>
          </Canvas>
          <Tabs>
            {["M2 1v6M7 1L3 4l4 3z", "M6 1L2 4l4 3z", "M2 1l4 3-4 3z", "M1 1l4 3-4 3zM6 1v6"].map((d) => (
              <TabNav key={d} aria-label="滚动标签">
                <svg width="8" height="8" viewBox="0 0 8 8"><path d={d} fill={c.disabled} stroke={c.disabled} strokeWidth=".7" /></svg>
              </TabNav>
            ))}
            <Tab $on>模型</Tab>
            <Tab><Mixed text="布局1" /></Tab>
            <Slash />
            <Tab><Mixed text="布局2" /></Tab>
            <Slash />
          </Tabs>
        </Center>
        <Side $right>
          <ToolColumn items={orderTools} h={80} />
          <ToolColumn items={modifyTools} h={304} />
        </Side>
      </Work>

      <Command>
        <Grip />
        <CommandBox>
          <CommandRow>
            <CommandText><Mixed latin={11} text="选择标注点或[标注方位角(A)/换向(E)/更多选项(O)]<返回>:/<退出选择>:" /></CommandText>
            <VScroll>
              <ScrollButton aria-label="向上滚动"><Chevron dir="up" /></ScrollButton>
              <ScrollButton aria-label="向下滚动"><Chevron /></ScrollButton>
            </VScroll>
          </CommandRow>
          <CommandRow $input>
            <CommandText>
              <Mixed latin={11} text={"{坐标系:当前\\比例:1.00000\\前缀:Xy\\图层:当前\\坐标互换:是\\编号:ZB7} 标注基点或[更新(R)/批量标(P)/编号(B)/选项(O)/]<退出>:"} />
            </CommandText>
            <HScroll>
              <ScrollButton aria-label="向左滚动"><Chevron dir="left" /></ScrollButton>
              <ScrollButton aria-label="滚动块" $thumb />
              <ScrollButton aria-label="向右滚动"><Chevron dir="right" /></ScrollButton>
            </HScroll>
          </CommandRow>
        </CommandBox>
      </Command>

      <Status>
        <Coords>1749.1051, 733.5972 , 0.0000</Coords>
        {modes.map((m) => (
          <Mode key={m.t} $w={m.w} $on={m.on} aria-pressed={!!m.on}>
            <Mixed text={m.t} />
          </Mode>
        ))}
        <Spacer />
        <ScaleButton>
          <span><Mixed text="注释比例: " /></span>
          <Mixed text="1:1" />
          <Tri />
        </ScaleButton>
        <TrayButton aria-label="注释可见性"><Icon name="annoBulb" size={13} /></TrayButton>
        <TrayButton aria-label="自动缩放"><Icon name="annoBolt" size={13} /></TrayButton>
        <TrayButton $boxed aria-label="锁定"><Icon name="statusLock" size={14} /></TrayButton>
        <TrayButton aria-label="状态栏菜单"><Tri /></TrayButton>
        <TrayButton aria-label="全屏显示"><Icon name="cleanScreen" size={16} /></TrayButton>
      </Status>

      <Taskbar>
        <TaskPart $bg="#3c9a3c" />
        <TaskPart $bg="#2a6be4" />
        <TaskPart $bg="#1592ee" />
      </Taskbar>

      <Watermark viewBox="0 0 184 96" aria-hidden="true">
        <MarkText $size={41} $weight={700} x="0" y="57">Bai</MarkText>
        <ellipse cx="69.500" cy="24" rx="6.500" ry="8.500" />
        <ellipse cx="82" cy="11.500" rx="6" ry="8.500" />
        <ellipse cx="97.500" cy="12.500" rx="6.500" ry="8.500" />
        <ellipse cx="108" cy="28" rx="6.500" ry="8.500" />
        <path d="M89 26c7 0 8 6 12 10 5 4 9 8 10 14 0 7-5 9-10 9-4 0-8-1-12-1s-8 1-12 1c-6 0-11-3-11-10 1-6 6-9 10-13s6-10 13-10z" />
        <MarkText $size={22} $weight={700} x="76" y="54">du</MarkText>
        <MarkText $size={30} $weight={700} x="117" y="55">经验</MarkText>
        <MarkText $size={22} $weight={400} x="3" y="82">jingyan.baidu.com</MarkText>
      </Watermark>
    </Window>
  );
}
